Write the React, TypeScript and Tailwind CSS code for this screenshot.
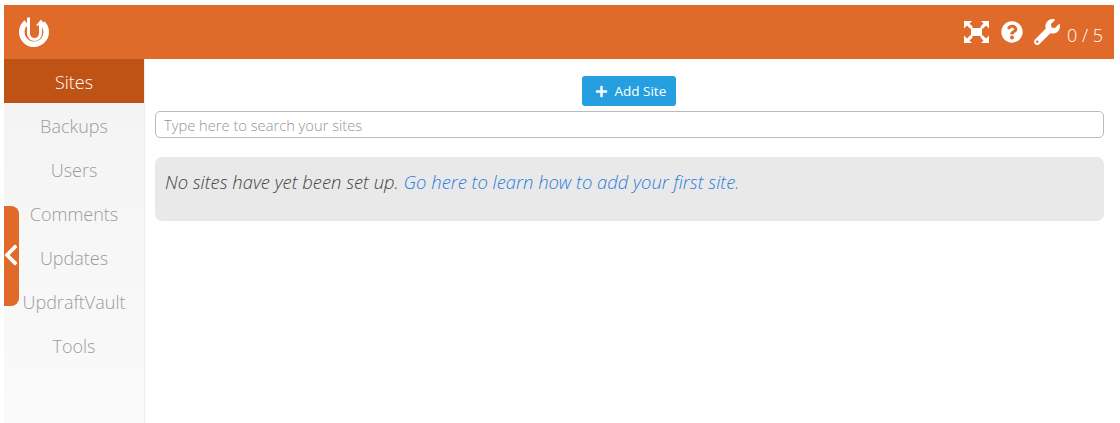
import { FaPlus, FaQuestionCircle, FaWrench, FaChevronLeft } from "react-icons/fa";

const navItems = ["Backups", "Users", "Comments", "Updates", "UpdraftVault", "Tools"];

function Logo() {
    return (
        <svg viewBox="0 0 32 32" className="w-[32px] h-[32px]" fill="none">
            <path d="M8.300 6.500A12.250 12.250 0 1 0 24.500 7.200" stroke="#fff" strokeWidth="5.500" />
            <path d="M10.500 1.500v16a6 6 0 0 0 12 0V9" stroke="#fff" strokeWidth="3" />
            <path d="M18 9.500l5-6 4 6z" fill="#fff" />
        </svg>
    );
}

function ExpandIcon() {
    return (
        <svg viewBox="0 0 25 22" className="w-[25px] h-[22px]" fill="#fff" stroke="none">
            <rect x="7" y="7" width="11" height="8" />
            <path d="M0 0h8L5.500 2.500 9 6 6.500 8 3 4.500 0 7.500z" />
            <path d="M25 0h-8l2.500 2.500L16 6l2.500 2L22 4.500l3 3z" />
            <path d="M0 22h8l-2.500-2.500L9 16l-2.500-2L3 17.500l-3-3z" />
            <path d="M25 22h-8l2.500-2.500L16 16l2.500-2L22 17.500l3-3z" />
        </svg>
    );
}

export default function App() {
    return (
        <div className="relative h-[423px] w-[1120px] overflow-hidden bg-white pt-[5px] pl-[4px] pr-[6px] font-['Open_Sans',sans-serif]">
            <header className="h-[54px] bg-[#df6a29] flex items-center justify-between pl-[14px] pr-[11px]">
                <Logo />
                <div className="flex items-center text-white">
                    <ExpandIcon />
                    <FaQuestionCircle className="ml-[12px] w-[22px] h-[22px]" />
                    <FaWrench className="ml-[11px] w-[26px] h-[26px] -mt-[1px]" />
                    <span className="ml-[7px] mt-[6px] text-[18px] font-light">0 / 5</span>
                </div>
            </header>
            <div className="flex h-[364px]">
                <nav className="w-[141px] shrink-0 border-r border-[#efefef] bg-gradient-to-b from-[#f3f3f3] to-[#fafafa] text-center text-[18px] font-light text-[#9c9c9c]">
                    <div className="h-[44px] pt-[2px] flex items-center justify-center bg-[#bf5315] text-white">Sites</div>
                    {navItems.map((item) => (
                        <div key={item} className="h-[44px] pt-[2px] flex items-center justify-center">{item}</div>
                    ))}
                </nav>
                <main className="flex-1 pl-[10px] pr-[10px] pt-[17px]">
                    <div className="flex justify-center pr-[2px]">
                        <button className="h-[30px] w-[94px] rounded-[3px] bg-[#259fdf] text-white text-[13.500px] flex items-center gap-[7px] pl-[13px]">
                            <FaPlus className="w-[13px] h-[13px]" />
                            <span className="w-[54px] text-left whitespace-nowrap">Add Site</span>
                        </button>
                    </div>
                    <input
                        className="mt-[5px] block w-full h-[27px] rounded-[5px] border border-[#b9b9b9] px-[8px] pt-[1px] text-[14.700px] font-light placeholder:text-[#959595] outline-none"
                        placeholder="Type here to search your sites"
                    />
                    <div className="mt-[19px] h-[64px] rounded-[7px] bg-[#e9e9e9] px-[10px] pt-[11px] text-[18.400px] font-light italic text-[#444]">
                        No sites have yet been set up. <a className="text-[#2a7de1]">Go here to learn how to add your first site.</a>
                    </div>
                </main>
            </div>
            <div className="absolute left-[4px] top-[206px] h-[100px] w-[15px] rounded-r-[8px] bg-[#df6a29] flex items-center justify-center">
                <FaChevronLeft className="text-white w-[16px] h-[24px] -mt-[2px] -ml-[1px]" />
            </div>
        </div>
    );
}
